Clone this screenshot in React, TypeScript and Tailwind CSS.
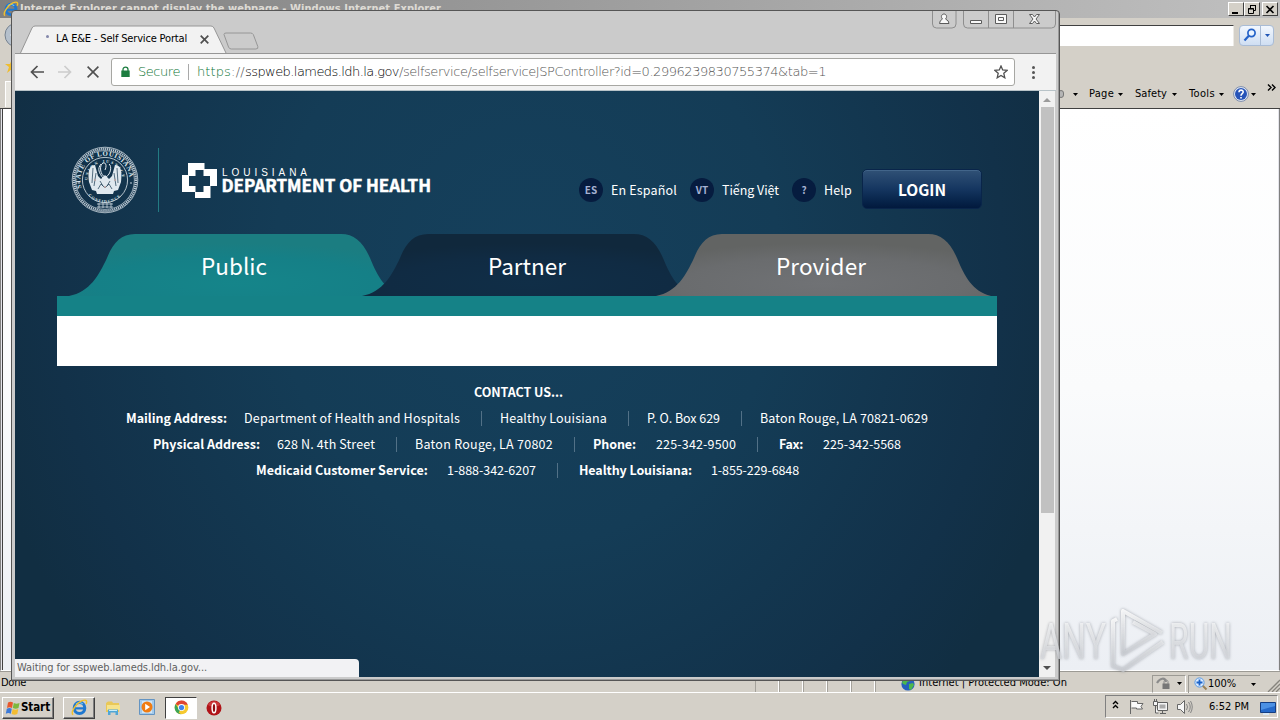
import { useLayoutEffect, useRef, type ReactNode } from "react";

type TextProps = { w: number; children: ReactNode; className?: string };

/** Single-line label whose tracking is adjusted so that it spans exactly `w` pixels. */
function Fit({ w, children, className = "" }: TextProps) {
  const ref = useRef<HTMLSpanElement>(null);
  useLayoutEffect(() => {
    const el = ref.current;
    if (!el) return;
    el.style.letterSpacing = "0px";
    const natural = el.getBoundingClientRect().width;
    const count = (el.textContent || "").length || 1;
    el.style.letterSpacing = `${(w - natural) / count}px`;
  }, [w]);
  return (
    <span ref={ref} className={`inline-block shrink-0 whitespace-pre ${className}`}>
      {children}
    </span>
  );
}

const ui = "font-['DejaVu_Sans_Condensed','DejaVu_Sans',sans-serif] [font-stretch:condensed]";
const site = "font-['Noto_Sans_CJK_SC','Noto_Sans',sans-serif]";

function IeLogo({ className }: { className: string }) {
  return (
    <svg viewBox="0 0 20 20" className={className}>
      <ellipse cx="10" cy="10.5" rx="6.2" ry="6.5" fill="none" stroke="#1f78d0" strokeWidth="3.6" />
      <path d="M5 11h12" stroke="#1f78d0" strokeWidth="2.6" />
      <path d="M6 6q4-3.500 8 0" fill="none" stroke="#6cc0f5" strokeWidth="1.500" />
      <path d="M2.500 18.500C-1 16 6 5 12.500 2.200 17 .4 19.500 1.500 17.800 6" fill="none" stroke="#f2c02c" strokeWidth="1.7" />
    </svg>
  );
}

function Caret() {
  return (
    <svg viewBox="0 0 5 3" className="h-[3px] w-[5px] shrink-0">
      <path d="M0 0h5L2.500 3z" fill="#000" />
    </svg>
  );
}

function ClassicButton({ children }: { children: ReactNode }) {
  return (
    <div className="flex h-[14px] w-4 items-center justify-center border border-t-white border-r-[#404040] border-b-[#404040] border-l-white bg-[#d4d0c8]">
      {children}
    </div>
  );
}

function ExplorerWindow() {
  return (
    <div className="flex h-[692px] flex-col bg-[#d4d0c8]">
      <div className="flex h-[18px] shrink-0 items-center bg-linear-to-r from-[#808080] to-[#c0c0c0] pr-[2px] pl-[3px]">
        <IeLogo className="h-4 w-4 shrink-0" />
        <Fit w={421} className={`${ui} ml-px text-[11px] leading-[18px] font-bold text-[#dedbd5]`}>
          Internet Explorer cannot display the webpage - Windows Internet Explorer
        </Fit>
        <div className="ml-auto flex">
          <ClassicButton>
            <svg viewBox="0 0 12 11" className="h-[11px] w-3"><path d="M2 8h6v2H2z" /></svg>
          </ClassicButton>
          <ClassicButton>
            <svg viewBox="0 0 12 11" className="h-[11px] w-3" fill="none" stroke="#000">
              <path d="M4.500 4V1.500h5v5H8M4 1.500h6M2.500 4.500h5v5h-5zM2 5h6" />
            </svg>
          </ClassicButton>
          <div className="ml-[2px]">
            <ClassicButton>
              <svg viewBox="0 0 12 11" className="h-[11px] w-3"><path d="M2.500 2l7 7M9.500 2l-7 7" stroke="#000" strokeWidth="1.6" /></svg>
            </ClassicButton>
          </div>
        </div>
      </div>

      <div className="flex h-[34px] shrink-0 items-center pl-1">
        <svg viewBox="0 0 26 26" className="h-[26px] w-[26px] shrink-0">
          <circle cx="13" cy="13" r="12" fill="#b5c0cc" stroke="#76828f" />
          <path d="M13 8l-5 5 5 5M8 13h11" fill="none" stroke="#fff" strokeWidth="2.500" />
        </svg>
        <div className="ml-6 h-[21px] w-[1180px] border-t border-r border-t-[#404040] border-r-[#eceae5] bg-white" />
        <div className="ml-[5px] flex h-[21px] w-[35px] rounded-sm border border-[#a9bcd6] bg-linear-to-b from-[#f2f7fe] to-[#cfdef2]">
          <div className="flex w-[21px] items-center justify-center border-r border-[#a9bcd6]">
            <svg viewBox="0 0 14 14" className="h-[14px] w-[14px]" fill="none">
              <circle cx="8.500" cy="5" r="3.600" fill="#eaf4ff" stroke="#2462c8" strokeWidth="1.700" />
              <path d="M5.800 7.800L1.500 12.500" stroke="#2462c8" strokeWidth="2.200" />
            </svg>
          </div>
          <div className="flex grow items-center justify-center">
            <svg viewBox="0 0 5 3" className="h-[3px] w-[5px]"><path d="M0 0h5L2.500 3z" fill="#1f55b5" /></svg>
          </div>
        </div>
      </div>

      <div className="flex h-[28px] shrink-0 items-center pl-1">
        <svg viewBox="0 0 16 16" className="h-4 w-4"><path d="M8 1l2 5h5l-4 3 2 6-5-4-5 4 2-6-4-3h5z" fill="#efbd2e" /></svg>
      </div>

      <div className={`${ui} flex h-[29px] shrink-0 items-center border-b border-[#404040] text-[11px] text-black`}>
        <div className="ml-[5px] h-[26px] w-10 border border-b-0 border-white bg-[#e7e5df]" />
        <div className="ml-[1013px] flex h-[14px] w-[7px] items-center">
          <div className="h-2 w-[6px] rounded-sm border border-[#777] bg-[#b5b5b5]" />
        </div>
        <div className="ml-[8px] flex items-center"><Caret /></div>
        <Fit w={25} className="ml-[11px]">Page</Fit>
        <div className="ml-1"><Caret /></div>
        <Fit w={32} className="ml-[12px]">Safety</Fit>
        <div className="ml-[5px]"><Caret /></div>
        <Fit w={26} className="ml-[12px]">Tools</Fit>
        <div className="ml-[4px]"><Caret /></div>
        <svg viewBox="0 0 16 16" className="ml-[9px] h-4 w-4 shrink-0">
          <circle cx="8" cy="8" r="7.400" fill="#e6edf8" stroke="#7b8aa8" />
          <circle cx="8" cy="8" r="6" fill="#2754b8" />
          <path d="M6 6.300c0-3 4.300-2.800 4.200-.2C10.200 7.700 8 7.600 8 9.700M8 11v1.500" fill="none" stroke="#fff" strokeWidth="1.600" />
        </svg>
        <div className="ml-[2px]"><Caret /></div>
        <svg viewBox="0 0 9 7" className="mb-[14px] ml-[11px] h-[7px] w-[9px] shrink-0" fill="none" stroke="#000" strokeWidth="1.400">
          <path d="M1 .5l3 3-3 3M5 .5l3 3-3 3" />
        </svg>
      </div>

      <div className="flex min-h-0 grow border-x border-b border-x-[#808080] border-b-white bg-[#e4e4ea] px-px">
        <div className="grow border-l border-[#404040] bg-linear-to-b from-white via-[#fafbfc] to-[#eceff4]" />
      </div>

      <div className={`${ui} flex h-[21px] shrink-0 items-center border-t border-[#9c9a94] pt-[3px] text-[11px] text-black`}>
        <Fit w={25} className="ml-[1px]">Done</Fit>
        <div className="ml-[729px] flex h-[17px] self-end">
          {[0, 1, 2, 3, 4].map((i) => (
            <div key={i} className="w-[24px] border-r border-l border-r-white border-l-[#a5a29b]" />
          ))}
        </div>
        <div className="h-[17px] w-[26px] self-end border-l border-[#a5a29b]" />
        <svg viewBox="0 0 14 14" className="h-[14px] w-[14px] shrink-0">
          <circle cx="7" cy="7" r="6.600" fill="#2560bd" />
          <path d="M1 5c3-3 4-4 7-4l1 3-3 1-1 3-3-1zM8 7l4-1 1 2-3 5-2-1z" fill="#4db84a" />
        </svg>
        <Fit w={148} className="ml-[4px]">Internet | Protected Mode: On</Fit>
        <div className="ml-auto flex h-[18px] w-[34px] shrink-0 items-center border border-t-[#9c9a94] border-r-white border-b-white border-l-[#9c9a94] pl-[3px]">
          <svg viewBox="0 0 16 14" className="h-[14px] w-4">
            <path d="M1 6c3-5 8-6 9-1" fill="none" stroke="#8b8b8b" strokeWidth="2.200" />
            <path d="M8 7V4.500c0-2 4-2 4 0V7" fill="none" stroke="#8a8a8a" />
            <path d="M6.500 6.500h7V12h-7z" fill="#777" />
          </svg>
          <div className="ml-[5px]"><Caret /></div>
        </div>
        <div className="ml-[2px] flex h-[18px] w-[72px] shrink-0 items-center border-t border-l border-[#9c9a94] pl-[5px]">
          <svg viewBox="0 0 14 14" className="h-[14px] w-[14px]">
            <path d="M8 8l4.500 4.500" stroke="#9a8258" strokeWidth="2" />
            <circle cx="5.500" cy="5.500" r="4.600" fill="#d9eaff" stroke="#5c9ce5" />
            <path d="M5.500 2.500v6M2.500 5.500h6" stroke="#1b62c8" strokeWidth="1.800" />
          </svg>
          <Fit w={28}>100%</Fit>
          <div className="ml-[15px]"><Caret /></div>
        </div>
        <svg viewBox="0 0 13 13" className="ml-[7px] h-[13px] w-[13px] shrink-0 self-end" fill="none" stroke="#87847d" strokeWidth="1.300">
          <path d="M1 13L13 1M5 13l8-8M9 13l4-4" />
        </svg>
      </div>
    </div>
  );
}

function Taskbar() {
  return (
    <div className={`${ui} flex h-7 items-center border-t border-white bg-[#d4d0c8] pr-[2px] pl-[2px] text-[11px] text-black`}>
      <div className="mt-[2px] flex h-[22px] w-[52px] items-center border border-t-white border-r-[#404040] border-b-[#404040] border-l-white pl-[2px] shadow-[inset_-1px_-1px_0_#808080]">
        <svg viewBox="0 0 16 16" className="h-4 w-4 shrink-0">
          <path d="M3 2.500c2-1 3-1 5 0L7 8C5 7 4 7 2 8z" fill="#e8582c" />
          <path d="M8.800 3c2 1 3.500 1 5.700 0l-1 5c-2 1-3.500 1-5.700 0z" fill="#7db83c" />
          <path d="M1.800 8.800c2-1 3-1 5 0l-1 5c-2-1-3-1-5 0z" fill="#3c7ad8" />
          <path d="M7.600 9c2 1 3.500 1 5.700 0l-1 5c-2 1-3.500 1-5.700 0z" fill="#f3bd33" />
        </svg>
        <Fit w={29} className="text-[11.500px] font-bold">Start</Fit>
      </div>
      <div className="mt-[2px] ml-[9px] flex h-[22px] w-8 items-center justify-center border border-t-white border-r-[#404040] border-b-[#404040] border-l-white shadow-[inset_-1px_-1px_0_#808080]">
        <IeLogo className="h-[17px] w-[17px]" />
      </div>
      <svg viewBox="0 0 16 16" className="mt-[2px] ml-[10px] h-4 w-4">
        <path d="M1 3l2-1.500h4L8 3h6v9H1z" fill="#e9c858" />
        <path d="M2 5h13v5H2z" fill="#f6e38c" />
        <path d="M3 15V9.500h10V15h-2.500v-2.500h-5V15z" fill="#50a6d6" />
        <path d="M4 10.500h8" stroke="#c9ecf8" />
      </svg>
      <svg viewBox="0 0 16 16" className="mt-[1px] ml-[18px] h-4 w-4">
        <path d="M.5.5h15v15H.5z" fill="#a3caeb" stroke="#6494c2" />
        <path d="M3 2h10v12H3z" fill="#d0e5f6" />
        <circle cx="8" cy="8" r="5.500" fill="#f07c12" />
        <path d="M6.200 4.800L11 8l-4.800 3.200z" fill="#fff" />
      </svg>
      <div className="mt-[2px] ml-[10px] flex h-[22px] w-8 items-center justify-center border border-t-[#404040] border-r-white border-b-white border-l-[#404040] bg-white">
        <svg viewBox="0 0 16 16" className="h-[15px] w-[15px]">
          <circle cx="8" cy="8" r="7.300" fill="#f6c92f" />
          <path d="M8 8L1.700 4.300A7.300 7.300 0 0 1 14.700 5H8z" fill="#e04632" />
          <path d="M8 8L5 13.500l2.500 1.800A7.300 7.300 0 0 1 1.700 4.300L5 9.500z" fill="#3ca457" />
          <circle cx="8" cy="8" r="3.700" fill="#fff" />
          <circle cx="8" cy="8" r="2.800" fill="#4284ec" />
        </svg>
      </div>
      <svg viewBox="0 0 16 16" className="mt-[2px] ml-[9px] h-4 w-4">
        <circle cx="8" cy="8" r="7.500" fill="#b01318" />
        <path d="M2 5c2-5 10-5 12 0-3 2-9 2-12 0z" fill="#e05252" opacity=".6" />
        <ellipse cx="8" cy="8" rx="1.900" ry="4.800" fill="#8f0d10" stroke="#fff" strokeWidth="1.500" />
      </svg>

      <div className="ml-auto flex h-[23px] w-[173px] items-center border border-t-[#808080] border-r-white border-b-white border-l-[#808080] pl-[6px]">
        <svg viewBox="0 0 7 9" className="mb-1 h-[9px] w-[7px]" fill="none" stroke="#000" strokeWidth="1.400">
          <path d="M1 4l2.500-2.500L6 4M1 8l2.500-2.500L6 8" />
        </svg>
        <svg viewBox="0 0 17 16" className="ml-[9px] h-4 w-[17px]" fill="#fafafa" stroke="#676767">
          <path d="M3.500 2.500h6v2h5.500l-2 3 1.500 2.500H8.500V9h-5M2.500 1v14" />
        </svg>
        <svg viewBox="0 0 17 16" className="ml-[7px] h-4 w-[17px]" fill="#f4f4f4" stroke="#606060">
          <path d="M5.500 3.500h10v8h-10zM8 14.500h6M10.500 12v2" />
          <path d="M7.500 5.500h6v4h-6z" fill="#aaa" stroke="none" />
          <path d="M1.500 2.500h4v4h-4zM2.500 0v2M4.500 0v2M3.500 7v7h3" />
        </svg>
        <svg viewBox="0 0 17 16" className="ml-[7px] h-4 w-[17px]" fill="#f7f7f7" stroke="#666">
          <path d="M1.500 5.500h3l4-4v13l-4-4h-3z" />
          <path d="M10.500 5q2 3 0 6M12.500 3q3.500 5 0 10M14.500 2q3.500 6 0 12" fill="none" stroke="#858585" />
        </svg>
        <Fit w={40} className="mt-[2px] ml-[16px]">6:52 PM</Fit>
        <svg viewBox="0 0 16 16" className="mt-[2px] ml-[11px] h-4 w-4">
          <path d="M.5 2.500h15v10H.5z" fill="#2569c9" stroke="#143e83" />
          <path d="M1 3h14v3L1 10z" fill="#4c91e4" />
          <path d="M3 13h6v2H3z" fill="#d8e6f2" />
        </svg>
      </div>
    </div>
  );
}

function StateSeal() {
  return (
    <svg viewBox="0 0 68 68" className="h-[68px] w-[68px] shrink-0" fill="none" stroke="#dfe8ee">
      <defs>
        <path id="seal-outer" d="M10.500 42A24.700 24.700 0 1 1 57.500 42" />
        <path id="seal-inner" d="M16.500 34A17.500 17.500 0 0 1 51.500 34" />
        <path id="seal-lower" d="M14.500 45A22 22 0 0 0 53.500 45" />
      </defs>
      <circle cx="34" cy="34" r="32.800" strokeWidth=".7" />
      <circle cx="34" cy="34" r="31" strokeWidth="2.400" strokeDasharray="1.200 .8" opacity=".85" />
      <circle cx="34" cy="34" r="29.400" strokeWidth=".6" />
      <circle cx="34" cy="34" r="22.600" strokeWidth=".8" />
      <g fill="#dfe8ee" stroke="none" className="font-['Liberation_Serif',serif]">
        <text fontSize="6.800" fontWeight="700"><textPath href="#seal-outer" textLength="82">STATE OF LOUISIANA</textPath></text>
        <text fontSize="4" fontWeight="700"><textPath href="#seal-inner" textLength="52">UNION JUSTICE</textPath></text>
        <text fontSize="4" fontWeight="700"><textPath href="#seal-lower" startOffset="5" textLength="36">CONFIDENCE</textPath></text>
        <path d="M24 19C17 19 17 28 18 36l3 8 4 1 1 3h16l1-3 4-1 3-8c1-9 1-17-6-17l-3 11-3 3-4-4-4 4-3-3z" />
        <circle cx="8" cy="37" r=".8" />
        <circle cx="60" cy="37" r=".8" />
      </g>
      <g strokeWidth="1">
        <path d="M34 31c-5-2-6-12-2-14 3-1 4 3 2 7M35 31c5-3 6-11 3-13M30 18c-4 5-2 9 2 14" />
        <path d="M22 22l-1 15M25 27l-2 13M46 22l1 15M43 27l2 13M27 43l3-5 4 4 4-4 3 5M29 35l3 5M39 35l-3 5" stroke="#17384f" strokeWidth=".7" />
      </g>
      <g fill="#bda4a2" stroke="none"><circle cx="24" cy="34" r="1" /><circle cx="44" cy="34" r="1" /><circle cx="34" cy="41" r="1" /></g>
      <path d="M26 58h16M26 61h16M28 57v5M32 57v5M36 57v5M40 57v5" strokeWidth=".9" opacity=".8" />
    </svg>
  );
}

function DepartmentLogo() {
  return (
    <svg viewBox="0 0 252 38" className="h-[38px] w-[252px] shrink-0 overflow-visible" fill="#fff">
      <path d="M7 1H23.500V7H36V24H29.500V36H14V30H1V13H7V1ZM14.500 8V14H8V24H14.500V30H22.500V24H29V14H22.500V8Z" fillRule="evenodd" />
      <text x="41" y="14" fontSize="10" textLength="85" className="font-['Liberation_Sans',sans-serif]">LOUISIANA</text>
      <text x="40.500" y="29.500" fontSize="16.500" fontWeight="700" stroke="#fff" strokeWidth=".5" textLength="209.500" lengthAdjust="spacingAndGlyphs" className="font-['Noto_Sans_CJK_SC',sans-serif]">DEPARTMENT OF HEALTH</text>
    </svg>
  );
}

function NavLink({ badge, label, w, className }: { badge: string; label: string; w: number; className: string }) {
  return (
    <div className={`flex items-center ${className}`}>
      <div className="mt-px flex h-6 w-6 items-center justify-center rounded-full bg-[#061c3f] text-[10px] leading-6 font-bold text-[#a5b1d2]">{badge}</div>
      <Fit w={w} className="mt-px ml-2 text-[12.500px] leading-6 text-white">{label}</Fit>
    </div>
  );
}

const tabs = [
  { label: "Public", w: 66, fill: "url(#tab-teal)", className: "" },
  { label: "Partner", w: 78, fill: "url(#tab-navy)", className: "-ml-[49px]" },
  { label: "Provider", w: 90, fill: "url(#tab-grey)", className: "-ml-[48px]" },
];

type Item = { text?: string; w?: number; bold?: boolean; className: string };
const contactRows: Item[][] = [
  [
    { text: "Mailing Address:", w: 101, bold: true, className: "ml-[111px]" },
    { text: "Department of Health and Hospitals", w: 216, className: "ml-[17px]" },
    { className: "ml-[21px]" },
    { text: "Healthy Louisiana", w: 107, className: "ml-[18px]" },
    { className: "ml-[21px]" },
    { text: "P. O. Box 629", w: 73, className: "ml-[18px]" },
    { className: "ml-[21px]" },
    { text: "Baton Rouge, LA 70821-0629", w: 168, className: "ml-[18px]" },
  ],
  [
    { text: "Physical Address:", w: 107, bold: true, className: "ml-[138px]" },
    { text: "628 N. 4th Street", w: 98, className: "ml-[17px]" },
    { className: "ml-[21px]" },
    { text: "Baton Rouge, LA 70802", w: 138, className: "ml-[18px]" },
    { className: "ml-[21px]" },
    { text: "Phone:", w: 43, bold: true, className: "ml-[18px]" },
    { text: "225-342-9500", w: 80, className: "ml-[20px]" },
    { className: "ml-[21px]" },
    { text: "Fax:", w: 24, bold: true, className: "ml-[21px]" },
    { text: "225-342-5568", w: 78, className: "ml-[20px]" },
  ],
  [
    { text: "Medicaid Customer Service:", w: 172, bold: true, className: "ml-[241px]" },
    { text: "1-888-342-6207", w: 89, className: "ml-[19px]" },
    { className: "ml-[21px]" },
    { text: "Healthy Louisiana:", w: 113, bold: true, className: "ml-[21px]" },
    { text: "1-855-229-6848", w: 88, className: "ml-[19px]" },
  ],
];

function PortalPage() {
  return (
    <div className={`${site} relative flex w-[1024px] shrink-0 flex-col bg-[radial-gradient(ellipse_560px_620px_at_50%_30%,#15405c_0%,#143c56_45%,#123149_85%,#112e42_100%)] text-white`}>
      <div className="mt-[55px] flex h-[68px] shrink-0 items-start pl-[56px]">
        <StateSeal />
        <div className="mt-[2px] ml-[19px] h-[64px] w-px bg-[#237b83]" />
        <div className="mt-[16px] ml-[22px]"><DepartmentLogo /></div>
        <div className="mt-[23px] ml-[146px] flex h-10 items-center">
          <NavLink badge="ES" label="En Español" w={66} className="" />
          <NavLink badge="VT" label="Tiếng Việt" w={57} className="ml-[13px]" />
          <NavLink badge="?" label="Help" w={28} className="ml-[13px]" />
          <div className="ml-[10px] flex h-10 w-[120px] items-center justify-center rounded-[5px] border border-[#09254a] bg-linear-to-b from-[#305176] via-[#153660] to-[#02193d] shadow-[inset_0_1px_0_#42658a]">
            <Fit w={48} className="text-[15.500px] leading-9 font-bold">LOGIN</Fit>
          </div>
        </div>
      </div>

      <div className="mt-[20px] ml-[50px] flex h-[62px] shrink-0">
        <svg className="h-0 w-0">
          <defs>
            <radialGradient id="tab-teal" cx=".5" cy=".8" r=".65"><stop offset="0" stopColor="#15858a" /><stop offset=".65" stopColor="#158087" /><stop offset="1" stopColor="#1b7d81" /></radialGradient>
            <radialGradient id="tab-navy" cx=".5" cy=".8" r=".65"><stop offset="0" stopColor="#102e47" /><stop offset=".65" stopColor="#102b43" /><stop offset="1" stopColor="#10283c" /></radialGradient>
            <radialGradient id="tab-grey" cx=".5" cy=".8" r=".65"><stop offset="0" stopColor="#707275" /><stop offset=".65" stopColor="#6a6c6e" /><stop offset="1" stopColor="#626463" /></radialGradient>
          </defs>
        </svg>
        {tabs.map((t) => (
          <div key={t.label} className={`grid h-[62px] w-[342px] shrink-0 ${t.className}`}>
            <svg viewBox="0 0 342 62" className="col-start-1 row-start-1 h-[62px] w-[342px]">
              <path d="M4 62C25 58 34 41 42 24 48 9 56 0 70 0H276C289 0 298 8 305 24 313 43 320 57 339 62Z" fill={t.fill} />
            </svg>
            <div className="col-start-1 row-start-1 flex items-center justify-center pr-[4px]">
              <Fit w={t.w} className="text-[22.500px] leading-[60px]">{t.label}</Fit>
            </div>
          </div>
        ))}
      </div>
      <div className="ml-[42px] h-[70px] w-[940px] shrink-0 border-t-20 border-[#158287] bg-white" />

      <div className="mt-[13px] flex flex-col text-[12.500px] leading-[26px]">
        <div className="flex h-[26px] pl-[459px]"><Fit w={89} className="font-bold">CONTACT US...</Fit></div>
        {contactRows.map((row, r) => (
          <div key={r} className="flex h-[26px] items-center">
            {row.map((item, i) =>
              item.text ? (
                <Fit key={i} w={item.w || 0} className={`${item.className} ${item.bold ? "font-bold" : ""}`}>{item.text}</Fit>
              ) : (
                <div key={i} className={`h-[15px] w-px bg-[#527187] ${item.className}`} />
              ),
            )}
          </div>
        ))}
      </div>

      <div className={`${ui} absolute bottom-0 left-0 flex h-[18px] w-[344px] items-center rounded-tr-[4px] bg-[#f2f2f4] pl-[2px] text-[11px] text-[#5f5f5f]`}>
        <Fit w={190}>Waiting for sspweb.lameds.ldh.la.gov...</Fit>
      </div>
    </div>
  );
}

function ChromeWindow() {
  return (
    <div className={`${ui} absolute top-[10px] left-[11px] flex h-[671px] w-[1049px] flex-col rounded-t-[4px] border border-[#565656] bg-[#cbcbcb] pr-[3px] pb-[3px] pl-[3px] shadow-[inset_-1px_-1px_0_#999]`}>
      <div className="-mr-[3px] -ml-[3px] flex h-[42px] shrink-0 items-start">
        <div className="mt-[14px] grid h-[28px] w-[248px] shrink-0">
          <svg viewBox="0 0 248 28" className="col-start-1 row-start-1 h-[28px] w-[248px]" fill="none" stroke="#969696">
            <path d="M8.500 28L20 3Q21 1 23 1H199Q201 1 202 3L214 28" fill="#f2f2f2" />
            <path d="M212 9.500q0-1.500 2-1.500h24.500q2 0 2.800 1.500l4.500 12q.8 2.500-2 2.500h-24.500q-2 0-2.800-2z" />
          </svg>
          <div className="col-start-1 row-start-1 flex items-center pt-px text-[11px] text-black">
            <div className="mb-[6px] ml-[34px] h-[3px] w-[3px] rounded-full bg-[#8387aa]" />
            <Fit w={131} className="ml-[7px]">LA E&amp;E - Self Service Portal</Fit>
            <svg viewBox="0 0 9 9" className="ml-[13px] h-[9px] w-[9px]"><path d="M.7.7l7.600 7.600M8.300.7L.7 8.300" stroke="#4f4f4f" strokeWidth="1.700" /></svg>
          </div>
        </div>
        <svg viewBox="0 0 126 18" className="mt-0 mr-[2px] ml-auto h-[18px] w-[126px] shrink-0" fill="none" stroke="#8e8e8e">
          <path d="M1.500 0V13q0 4 4 4H21q4 0 4-4V0M32.500 0V13q0 4 4 4h84q4 0 4-4V0M57.500 0V17M82.500 0V17" />
          <g fill="#f8f8f8" stroke="#5b5b5b">
            <path d="M8.500 12.500q0-3 3-4.500c-2-2-1-5 1.500-5s3.500 3 1.500 5q3.500 1.500 3.500 4.500zM39.500 9.500h11v3h-11zM64.500 3.500h11v9h-11zM67.500 6.500h5v3h-5z" />
            <path d="M98.500 3.500h3l2 2.500 2-2.500h3l-3.500 4.500 3.500 4.500h-3l-2-2.500-2 2.500h-3l3.500-4.500z" />
          </g>
        </svg>
      </div>

      <div className="flex h-[38px] shrink-0 items-center border-t border-b border-t-[#969696] border-b-[#b8c3c8] bg-[#f2f2f2]">
        <svg viewBox="0 0 14 14" className="ml-[15px] h-[14px] w-[14px]" fill="none" stroke="#505050" strokeWidth="1.700"><path d="M7.500 1L1.500 7l6 6M1.500 7H14" /></svg>
        <svg viewBox="0 0 14 14" className="ml-[14px] h-[14px] w-[14px]" fill="none" stroke="#cccccc" strokeWidth="1.700"><path d="M6.500 1l6 6-6 6M12.500 7H0" /></svg>
        <svg viewBox="0 0 12 12" className="ml-[15px] h-3 w-3" stroke="#505050" strokeWidth="1.600"><path d="M.6.6l10.800 10.800M11.400.6L.6 11.400" /></svg>
        <div className="ml-[12px] flex h-[28px] w-[904px] items-center rounded-[3px] border border-[#a7a7a3] bg-white font-['DejaVu_Sans_Light','DejaVu_Sans_Condensed','DejaVu_Sans',sans-serif] text-[13px] leading-[26px] font-extralight">
          <svg viewBox="0 0 9 12" className="ml-[9px] h-3 w-[9px]"><path d="M2 6V3.500C2 .3 7 .3 7 3.500V6" fill="none" stroke="#1d7d40" strokeWidth="1.300" /><path d="M.3 4.500h8.400V11H.3z" fill="#1d7d40" /></svg>
          <Fit w={42} className="ml-[8px] text-[#0b7434]">Secure</Fit>
          <div className="ml-[8px] h-4 w-px bg-[#a9a9a9]" />
          <Fit w={34} className="ml-[8px] text-[#0b7434]">https</Fit>
          <Fit w={14} className="text-[#555]">://</Fit>
          <Fit w={154} className="text-black">sspweb.lameds.ldh.la.gov</Fit>
          <Fit w={427} className="text-[#555]">/selfservice/selfserviceJSPController?id=0.2996239830755374&amp;tab=1</Fit>
          <svg viewBox="0 0 14 14" className="mr-[6px] ml-auto h-[14px] w-[14px]" fill="none" stroke="#505050" strokeWidth="1.300"><path d="M7 1l1.700 4 4.600.3-3.500 3 1 4.500L7 10.500l-3.800 2.300 1-4.500-3.500-3L5.300 5z" /></svg>
        </div>
        <div className="ml-[17px] flex flex-col gap-[2px]">
          {[0, 1, 2].map((i) => <div key={i} className="h-[3px] w-[3px] rounded-full bg-[#555]" />)}
        </div>
      </div>

      <div className="flex min-h-0 grow">
        <PortalPage />
        <div className="flex w-[16px] shrink-0 flex-col items-center bg-[#f1f1f1]">
          <svg viewBox="0 0 8 4" className="mt-[7px] h-1 w-2"><path d="M0 4h8L4 0z" fill="#9b9b9b" /></svg>
          <div className="mt-[5px] h-[406px] w-[13px] bg-[#c1c1c1]" />
          <svg viewBox="0 0 8 4" className="mt-auto mb-[7px] h-1 w-2"><path d="M0 0h8L4 4z" fill="#505050" /></svg>
        </div>
      </div>
    </div>
  );
}

function Watermark() {
  return (
    <svg viewBox="0 0 200 70" className="absolute top-[605px] left-[1037px] h-[70px] w-[200px] overflow-visible drop-shadow-[0_0_1.500px_rgba(90,95,105,0.6)]">
      <defs>
        <linearGradient id="mark" x2="0" y2="1"><stop offset="0" stopColor="#fff" stopOpacity=".85" /><stop offset="1" stopColor="#cdd0d5" stopOpacity=".65" /></linearGradient>
      </defs>
      <g fill="url(#mark)" fontSize="50" className="font-[Roboto,sans-serif]">
        <text x="3" y="54" textLength="66" lengthAdjust="spacingAndGlyphs">ANY</text>
        <text x="132" y="54" textLength="63" lengthAdjust="spacingAndGlyphs">RUN</text>
      </g>
      <g fill="none" stroke="url(#mark)" strokeWidth="4" strokeLinejoin="round">
        <path d="M80 14L76 16V61L86 65L126 37" />
        <path d="M125 28L86 6V49L118 29L96 17" />
      </g>
    </svg>
  );
}

export default function App() {
  return (
    <div className="relative h-[720px] w-[1280px] overflow-hidden">
      <ExplorerWindow />
      <Taskbar />
      <ChromeWindow />
      <Watermark />
    </div>
  );
}
